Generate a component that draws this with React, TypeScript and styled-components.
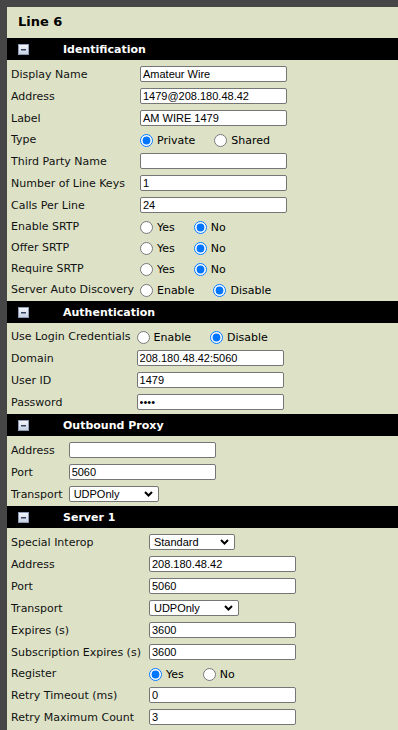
import React from 'react';
import styled, { createGlobalStyle } from 'styled-components';

const GlobalStyle = createGlobalStyle`
  html, body { margin: 0; padding: 0; background: #464646; }
  body {
    font-family: "DejaVu Sans", Verdana, sans-serif;
    font-size: 11px;
    color: #000;
  }
`;

const Page = styled.div`
  padding: 7px 0 0 7px;
  box-sizing: border-box;
  min-height: 730px;
`;

const Panel = styled.div`
  background: #dde2c7;
  min-height: 723px;
`;

const Title = styled.h1`
  margin: 0;
  padding: 7px 11px 8px;
  font: bold 13px/16px "DejaVu Sans", Verdana, sans-serif;
`;

const SectionHeader = styled.div`
  height: 22px;
  background: #000;
  display: flex;
  align-items: center;
  padding-left: 11px;
  color: #fff;
  font-weight: bold;
  font-size: 11px;
`;

const HeaderText = styled.span`
  margin-left: 34px;
`;

const Table = styled.table`
  border-collapse: collapse;
  width: 100%;
  margin: 3px 0 1px;
`;

const Row = styled.tr<{ $h: number }>`
  height: ${(p) => p.$h}px;
`;

const LabelCell = styled.td<{ $extra?: number }>`
  padding: 0 ${(p) => 6 + (p.$extra ?? 0)}px 0 4px;
  white-space: nowrap;
  vertical-align: middle;
  color: #111;
`;

const ValueCell = styled.td`
  padding: 0;
  width: 100%;
  vertical-align: middle;
`;

const TextInput = styled.input`
  box-sizing: border-box;
  display: block;
  width: 147px;
  height: 16px;
  border: 1px solid #767676;
  border-radius: 2px;
  padding: 0 2px;
  margin: 0;
  font: 11px "Liberation Sans", Arial, sans-serif;
  color: #000;
  background: #fff;
  outline: none;
`;

const SelectWrap = styled.div<{ $w: number }>`
  position: relative;
  width: ${(p) => p.$w}px;
  height: 16px;
`;

const Select = styled.select`
  appearance: none;
  -webkit-appearance: none;
  box-sizing: border-box;
  width: 100%;
  height: 16px;
  border: 1px solid #767676;
  border-radius: 2px;
  padding: 0 0 0 4px;
  margin: 0;
  font: 11px "Liberation Sans", Arial, sans-serif;
  color: #000;
  background: #fff;
  outline: none;
`;

const Chevron = styled.svg`
  position: absolute;
  right: 6px;
  top: 5px;
  pointer-events: none;
`;

const RadioGroup = styled.div`
  display: flex;
  align-items: center;
  gap: 19px;
`;

const RadioOption = styled.label`
  display: flex;
  align-items: center;
  white-space: nowrap;
  padding-top: 1px;
`;

const Radio = styled.input`
  width: 13px;
  height: 13px;
  margin: 0 4px 0 0;
  accent-color: #0075ff;
`;

const ToggleIcon = () => (
  <svg width="11" height="11" viewBox="0 0 11 11">
    <defs>
      <linearGradient id="tg" x1="0" y1="0" x2="0" y2="1">
        <stop offset="0" stopColor="#f6f8fc" />
        <stop offset="1" stopColor="#c6d0e2" />
      </linearGradient>
    </defs>
    <rect x="0.5" y="0.5" width="10" height="10" fill="url(#tg)" stroke="#8e9bb4" />
    <rect x="3" y="5" width="5" height="1.5" fill="#34425e" />
  </svg>
);

type Field =
  | { kind: 'text'; label: string; value: string; password?: boolean }
  | { kind: 'radio'; label: string; options: string[]; checked: number }
  | { kind: 'select'; label: string; value: string; width: number };

const Section = ({
  title,
  fields,
  id,
  labelExtra,
}: {
  title: string;
  fields: Field[];
  id: string;
  labelExtra?: number;
}) => (
  <>
    <SectionHeader>
      <ToggleIcon />
      <HeaderText>{title}</HeaderText>
    </SectionHeader>
    <Table>
      <tbody>
        {fields.map((f, i) => (
          <Row key={i} $h={f.kind === 'radio' ? 21 : 22}>
            <LabelCell $extra={labelExtra}>{f.label}</LabelCell>
            <ValueCell>
              {f.kind === 'text' && (
                <TextInput
                  type={f.password ? 'password' : 'text'}
                  defaultValue={f.value}
                />
              )}
              {f.kind === 'radio' && (
                <RadioGroup>
                  {f.options.map((o, j) => (
                    <RadioOption key={o}>
                      <Radio type="radio" name={`${id}-${i}`} defaultChecked={j === f.checked} />
                      {o}
                    </RadioOption>
                  ))}
                </RadioGroup>
              )}
              {f.kind === 'select' && (
                <SelectWrap $w={f.width}>
                  <Select defaultValue={f.value}>
                    <option>{f.value}</option>
                  </Select>
                  <Chevron width="9" height="6" viewBox="0 0 9 6">
                    <path d="M1 1 L4.5 4.5 L8 1" fill="none" stroke="#000" strokeWidth="2" />
                  </Chevron>
                </SelectWrap>
              )}
            </ValueCell>
          </Row>
        ))}
      </tbody>
    </Table>
  </>
);

const identification: Field[] = [
  { kind: 'text', label: 'Display Name', value: 'Amateur Wire' },
  { kind: 'text', label: 'Address', value: '1479@208.180.48.42' },
  { kind: 'text', label: 'Label', value: 'AM WIRE 1479' },
  { kind: 'radio', label: 'Type', options: ['Private', 'Shared'], checked: 0 },
  { kind: 'text', label: 'Third Party Name', value: '' },
  { kind: 'text', label: 'Number of Line Keys', value: '1' },
  { kind: 'text', label: 'Calls Per Line', value: '24' },
  { kind: 'radio', label: 'Enable SRTP', options: ['Yes', 'No'], checked: 1 },
  { kind: 'radio', label: 'Offer SRTP', options: ['Yes', 'No'], checked: 1 },
  { kind: 'radio', label: 'Require SRTP', options: ['Yes', 'No'], checked: 1 },
  { kind: 'radio', label: 'Server Auto Discovery', options: ['Enable', 'Disable'], checked: 1 },
];

const authentication: Field[] = [
  { kind: 'radio', label: 'Use Login Credentials', options: ['Enable', 'Disable'], checked: 1 },
  { kind: 'text', label: 'Domain', value: '208.180.48.42:5060' },
  { kind: 'text', label: 'User ID', value: '1479' },
  { kind: 'text', label: 'Password', value: 'abcd', password: true },
];

const outbound: Field[] = [
  { kind: 'text', label: 'Address', value: '' },
  { kind: 'text', label: 'Port', value: '5060' },
  { kind: 'select', label: 'Transport', value: 'UDPOnly', width: 90 },
];

const server1: Field[] = [
  { kind: 'select', label: 'Special Interop', value: 'Standard', width: 86 },
  { kind: 'text', label: 'Address', value: '208.180.48.42' },
  { kind: 'text', label: 'Port', value: '5060' },
  { kind: 'select', label: 'Transport', value: 'UDPOnly', width: 90 },
  { kind: 'text', label: 'Expires (s)', value: '3600' },
  { kind: 'text', label: 'Subscription Expires (s)', value: '3600' },
  { kind: 'radio', label: 'Register', options: ['Yes', 'No'], checked: 0 },
  { kind: 'text', label: 'Retry Timeout (ms)', value: '0' },
  { kind: 'text', label: 'Retry Maximum Count', value: '3' },
];

export default function App() {
  return (
    <>
      <GlobalStyle />
      <Page>
        <Panel>
          <Title>Line 6</Title>
          <Section id="ident" title="Identification" fields={identification} />
          <Section id="auth" title="Authentication" fields={authentication} />
          <Section id="proxy" title="Outbound Proxy" fields={outbound} />
          <Section id="srv1" title="Server 1" fields={server1} labelExtra={2} />
        </Panel>
      </Page>
    </>
  );
}
